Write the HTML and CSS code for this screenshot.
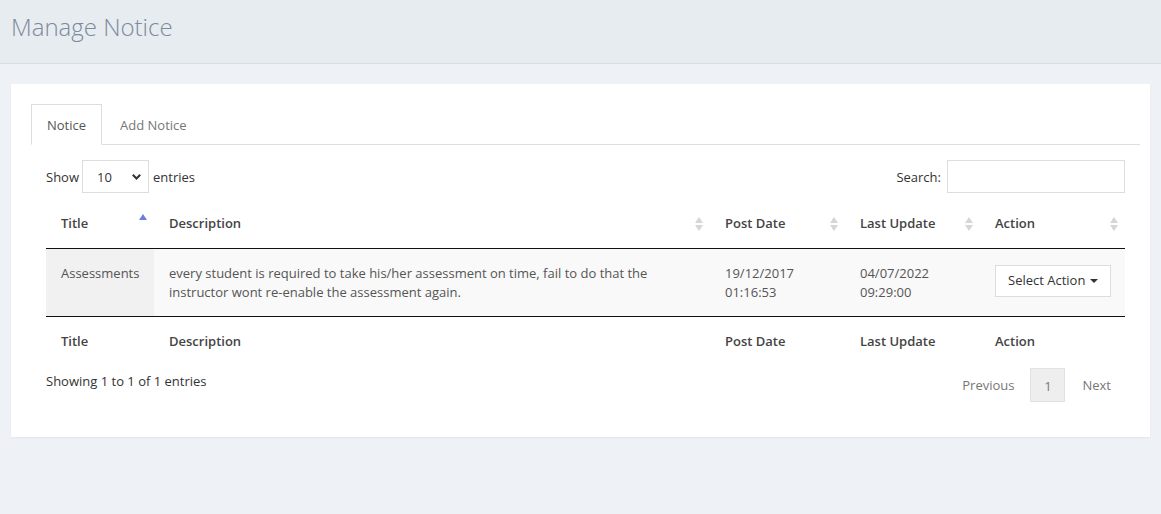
FILE: index.html
```html
<!DOCTYPE html>
<html>
<head>
<meta charset="utf-8">
<link rel="stylesheet" href="styles.css">
</head>
<body>
<header class="page-header">
  <h1 class="page-title">Manage Notice</h1>
</header>
<main class="content">
  <section class="card">
    <ul class="tabs">
      <li class="tab active">Notice</li>
      <li class="tab">Add Notice</li>
    </ul>
    <div class="tab-pane">
      <div class="dt-top">
        <label class="dt-length">Show
          <span class="select">10
            <svg class="chev" width="11" height="8" viewBox="0 0 11 8"><path d="M1.8 1.8 L5.5 5.5 L9.2 1.8" fill="none" stroke="#333" stroke-width="2"/></svg>
          </span>
          entries</label>
        <label class="dt-search">Search: <span class="search-input"></span></label>
      </div>
      <table class="dt">
        <colgroup>
          <col class="c-title"><col class="c-desc"><col class="c-post"><col class="c-upd"><col class="c-act">
        </colgroup>
        <thead>
          <tr>
            <th class="sort asc">Title</th>
            <th class="sort">Description</th>
            <th class="sort">Post Date</th>
            <th class="sort">Last Update</th>
            <th class="sort">Action</th>
          </tr>
        </thead>
        <tbody>
          <tr>
            <td class="sorted">Assessments</td>
            <td>every student is required to take his/her assessment on time, fail to do that the instructor wont re-enable the assessment again.</td>
            <td>19/12/2017<br>01:16:53</td>
            <td>04/07/2022<br>09:29:00</td>
            <td><span class="btn">Select Action <span class="caret"></span></span></td>
          </tr>
        </tbody>
        <tfoot>
          <tr>
            <th>Title</th>
            <th>Description</th>
            <th>Post Date</th>
            <th>Last Update</th>
            <th>Action</th>
          </tr>
        </tfoot>
      </table>
      <div class="dt-bottom">
        <div class="dt-info">Showing 1 to 1 of 1 entries</div>
        <div class="pager">
          <span class="pg prev">Previous</span>
          <span class="pg current">1</span>
          <span class="pg next">Next</span>
        </div>
      </div>
    </div>
  </section>
</main>
</body>
</html>
```
FILE: styles.css
```css
* { box-sizing: border-box; }
html, body { margin: 0; padding: 0; }
body {
  background: #eef2f6;
  font-family: "Open Sans", "Liberation Sans", sans-serif;
  font-size: 13px;
  color: #333;
  height: 514px;
  overflow: hidden;
}
.page-header {
  height: 64px;
  background: #e7ecf0;
  border-bottom: 1px solid #d9dee3;
  display: flex;
  align-items: center;
  padding: 0 11px;
}
.page-title {
  margin: 0;
  font-weight: 300;
  font-size: 24px;
  color: #7d8a9c;
  position: relative;
  top: -5px;
}
.content {
  padding: 20px 11px;
}
.card {
  background: #fff;
  padding: 20px 10px 20px 20px;
  height: 353px;
  box-shadow: 0 1px 2px rgba(0,0,0,0.05);
}
.tabs {
  list-style: none;
  margin: 0;
  padding: 0;
  display: flex;
  border-bottom: 1px solid #ddd;
  height: 41px;
}
.tab {
  padding: 0 15px;
  line-height: 40px;
  color: #777;
  border: 1px solid transparent;
  margin-bottom: -1px;
  height: 41px;
}
.tab + .tab { margin-left: 2px; }
.tab.active {
  border-color: #ddd;
  border-bottom-color: #fff;
  background: #fff;
  color: #555;
}
.tab-pane {
  padding: 15px 15px 0 15px;
}
.dt-top {
  display: flex;
  justify-content: space-between;
  align-items: center;
  height: 33px;
}
.dt-length, .dt-search {
  display: flex;
  align-items: center;
  gap: 3px;
  color: #333;
}
.dt-length .select { margin-right: 1px; }
.dt-search { gap: 6px; }
.select {
  width: 67px;
  height: 33px;
  border: 1px solid #ddd;
  display: flex;
  align-items: center;
  justify-content: space-between;
  padding: 0 6px 0 14px;
}
.chev { margin-top: 1px; }
.search-input {
  width: 178px;
  height: 33px;
  border: 1px solid #ddd;
  display: block;
}
.dt {
  width: 100%;
  border-collapse: collapse;
  margin-top: 12px;
  table-layout: fixed;
}
.c-title { width: 108px; }
.c-desc { width: 556px; }
.c-post { width: 135px; }
.c-upd { width: 135px; }
.c-act { width: 145px; }
.dt th {
  text-align: left;
  font-weight: 600;
  color: #444;
  padding: 0 15px;
  height: 43px;
}
.dt thead th {
  border-bottom: 1px solid #111;
  position: relative;
  padding-right: 25px;
  padding-bottom: 6px;
}
.dt thead th.sort::before,
.dt thead th.sort::after {
  content: "";
  position: absolute;
  right: 7px;
  width: 0;
  height: 0;
  border-left: 4px solid transparent;
  border-right: 4px solid transparent;
}
.dt thead th.sort::before {
  top: 12px;
  border-bottom: 6px solid #d6d6d6;
}
.dt thead th.sort::after {
  top: 20px;
  border-top: 6px solid #d6d6d6;
}
.dt thead th.asc::before {
  border-bottom-color: #6b7ee0;
  top: 9px;
}
.dt thead th.asc::after { display: none; }
.dt tbody td {
  background: #f9f9f9;
  color: #555;
  padding: 15px 15px 14px;
  vertical-align: top;
  line-height: 19px;
  height: 65px;
}
.dt tbody td.sorted { background: #f1f1f1; }
.dt tbody tr { border-bottom: 1px solid #111; }
.btn {
  display: inline-flex;
  align-items: center;
  gap: 5px;
  height: 32px;
  padding: 0 12px;
  border: 1px solid #ddd;
  background: #fff;
  color: #333;
  white-space: nowrap;
  position: relative;
  top: 1px;
}
.caret {
  width: 0;
  height: 0;
  border-left: 4px solid transparent;
  border-right: 4px solid transparent;
  border-top: 4px solid #333;
}
.dt tfoot th { height: 49px; padding-bottom: 0; }
.dt-bottom {
  display: flex;
  justify-content: space-between;
  align-items: flex-start;
  margin-top: 3px;
}
.dt-info { padding-top: 4px; }
.pager {
  display: flex;
  align-items: center;
}
.pg {
  height: 34px;
  line-height: 34px;
  color: #777;
}
.pg.prev { padding: 0 16px 0 0; }
.pg.next { padding: 0 14px 0 17px; }
.pg.current {
  background: #eee;
  border: 1px solid #e2e2e2;
  width: 35px;
  text-align: center;
  color: #777;
}
```
